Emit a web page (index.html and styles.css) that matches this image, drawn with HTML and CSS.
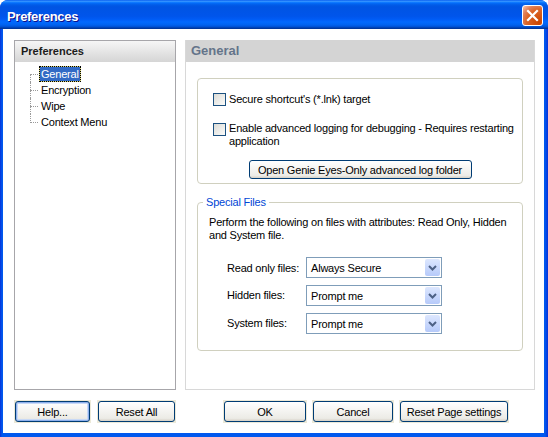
FILE: index.html
```html
<!DOCTYPE html>
<html>
<head>
<meta charset="utf-8">
<title>Preferences</title>
<link rel="stylesheet" href="styles.css">
</head>
<body>
<div class="window">
  <div class="titlebar">
    <span class="title">Preferences</span>
    <span class="close">
      <svg width="13" height="13" viewBox="0 0 13 13"><path d="M2 2 L11 11 M11 2 L2 11" stroke="#fff" stroke-width="2.2" stroke-linecap="square" fill="none"/></svg>
    </span>
  </div>
  <div class="client">
    <div class="main">
      <div class="nav">
        <div class="nav-head">Preferences</div>
        <ul class="tree">
          <li class="selected"><span>General</span></li>
          <li><span>Encryption</span></li>
          <li><span>Wipe</span></li>
          <li><span>Context Menu</span></li>
        </ul>
      </div>
      <div class="page">
        <div class="page-head">General</div>
        <div class="page-body">
          <div class="group first">
            <div class="check"><span class="box"></span><span class="ctext">Secure shortcut's (*.lnk) target</span></div>
            <div class="check two"><span class="box"></span><span class="ctext">Enable advanced logging for debugging - Requires restarting<br>application</span></div>
            <div class="btn-row"><span class="sbtn">Open Genie Eyes-Only advanced log folder</span></div>
          </div>
          <fieldset class="group special">
            <legend>Special Files</legend>
            <p>Perform the following on files with attributes: Read Only, Hidden<br>and System file.</p>
            <div class="rows">
              <div class="row"><span class="lbl">Read only files:</span><div class="combo"><span>Always Secure</span><span class="drop"><svg width="9" height="6" viewBox="0 0 9 6"><path d="M1 1 L4.5 4.5 L8 1" stroke="#4d6185" stroke-width="2" fill="none"/></svg></span></div></div>
              <div class="row"><span class="lbl up">Hidden files:</span><div class="combo"><span>Prompt me</span><span class="drop"><svg width="9" height="6" viewBox="0 0 9 6"><path d="M1 1 L4.5 4.5 L8 1" stroke="#4d6185" stroke-width="2" fill="none"/></svg></span></div></div>
              <div class="row"><span class="lbl up">System files:</span><div class="combo"><span>Prompt me</span><span class="drop"><svg width="9" height="6" viewBox="0 0 9 6"><path d="M1 1 L4.5 4.5 L8 1" stroke="#4d6185" stroke-width="2" fill="none"/></svg></span></div></div>
            </div>
          </fieldset>
        </div>
      </div>
    </div>
    <div class="buttons">
      <span class="xbtn help"><span>Help...</span></span>
      <span class="xbtn resetall"><span>Reset All</span></span>
      <span class="xbtn ok"><span>OK</span></span>
      <span class="xbtn cancel"><span>Cancel</span></span>
      <span class="xbtn resetpage"><span>Reset Page settings</span></span>
    </div>
  </div>
</div>
</body>
</html>
```

FILE: styles.css
```css
html, body {
  margin: 0;
  padding: 0;
  background: #ffffff;
}
body {
  font-family: "Liberation Sans", Arial, sans-serif;
  font-size: 11px;
  letter-spacing: -0.2px;
  color: #000;
}
.window {
  width: 548px;
  height: 437px;
  display: flex;
  flex-direction: column;
  background: linear-gradient(to right, #0831d9 0px, #0058ee 2px, #0058ee 545px, #0831d9 548px);
  border-radius: 8px 8px 0 0;
  overflow: hidden;
  box-sizing: border-box;
}
.titlebar {
  height: 29px;
  flex: none;
  display: flex;
  align-items: flex-start;
  justify-content: space-between;
  padding: 0 5px 0 7px;
  background: linear-gradient(to bottom, #0058ee 0%, #3a93ff 4%, #288eff 6%, #127dff 8%, #036ffc 10%, #0262ee 14%, #0057e5 20%, #0054e3 24%, #0055eb 56%, #005bf5 66%, #026afe 76%, #0062ef 86%, #0052d6 92%, #0040ab 96%, #003092 100%);
}
.title {
  color: #fff;
  font-weight: bold;
  font-size: 13px;
  line-height: 17px;
  margin-top: 8px;
  text-shadow: 1px 1px #0f1089;
  letter-spacing: -0.3px;
}
.close {
  margin-top: 5px;
  width: 21px;
  height: 21px;
  box-sizing: border-box;
  border: 1px solid #fff;
  border-radius: 3px;
  background: radial-gradient(circle at 85% 85%, #cc4600 0%, #dc6527 55%, #e0805a 75%, #f5b89c 95%);
  display: flex;
  align-items: center;
  justify-content: center;
}
.client {
  flex: 1;
  margin: 0 4px 4px 3px;
  background: #fff;
  padding: 11px 9px 0 11px;
  display: flex;
  flex-direction: column;
}
.main {
  display: flex;
  gap: 9px;
  height: 350px;
}
.nav {
  width: 162px;
  border: 1px solid #a7a6aa;
  box-sizing: border-box;
}
.nav-head {
  height: 21px;
  line-height: 21px;
  padding-left: 6px;
  font-weight: bold;
  color: #1c1c1c;
  letter-spacing: 0;
  background: linear-gradient(#f6f6f6, #d5d5d5);
}
.tree {
  list-style: none;
  margin: 0;
  padding: 4px 0 0 24px;
}
.tree li {
  position: relative;
  height: 16px;
  line-height: 16px;
}
.tree li span {
  display: inline-block;
  height: 16px;
  padding: 0 2px;
  box-sizing: border-box;
}
.tree li.selected span {
  background: #316ac5;
  color: #fff;
  box-shadow: inset 0 0 0 1px #d8d47a;
  outline: 1px dotted #000;
  outline-offset: -1px;
}
.tree li::before {
  content: "";
  position: absolute;
  left: -9px;
  top: 8px;
  width: 8px;
  border-top: 1px dotted #9a9a9a;
}
.tree li::after {
  content: "";
  position: absolute;
  left: -9px;
  top: 0;
  height: 16px;
  border-left: 1px dotted #9a9a9a;
}
.tree li:first-child::after {
  top: 8px;
  height: 8px;
}
.tree li:last-child::after {
  height: 9px;
}
.page {
  width: 350px;
  border: 1px solid #d8d8d8;
  border-top: none;
  box-sizing: border-box;
}
.page-head {
  height: 22px;
  line-height: 22px;
  padding-left: 5px;
  background: #d4d4d4;
  color: #64748a;
  font-weight: bold;
  font-size: 13px;
  letter-spacing: 0;
}
.page-body {
  padding: 16px 11px 0 11px;
}
.group {
  border: 1px solid #d0d0bf;
  border-radius: 4px;
}
.group.first {
  padding: 14px 0 4px 0;
}
.check {
  display: flex;
  align-items: flex-start;
  gap: 3px;
  line-height: 13px;
  margin-left: 15px;
}
.check.two {
  margin-top: 16px;
}
.ctext {
  white-space: nowrap;
}
.box {
  flex: none;
  width: 13px;
  height: 13px;
  box-sizing: border-box;
  border: 1px solid #1c5180;
  background: linear-gradient(135deg, #dcdcd7, #fbfbf9);
}
.check.two .box {
  margin-top: 1px;
}
.btn-row {
  display: flex;
  justify-content: center;
  margin-top: 12px;
}
.sbtn {
  width: 223px;
  height: 19px;
  box-sizing: border-box;
  border: 1px solid #003c74;
  border-radius: 3px;
  background: linear-gradient(#fff, #ecebe6 86%, #d6d0c5);
  display: flex;
  align-items: center;
  justify-content: center;
}
.special {
  margin: 12px 0 0 0;
  padding: 7px 0 16px 11px;
  min-width: 0;
}
.special legend {
  padding: 0 3px;
  margin-left: -6px;
  color: #0046d5;
  line-height: 13px;
}
.special p {
  margin: 0;
  line-height: 13px;
  white-space: nowrap;
}
.rows {
  margin-top: 15px;
  padding-left: 18px;
  display: flex;
  flex-direction: column;
  gap: 7px;
}
.row {
  display: flex;
  align-items: center;
  height: 21px;
}
.lbl {
  width: 79px;
  flex: none;
}
.lbl.up {
  position: relative;
  top: -1px;
}
.combo {
  width: 136px;
  height: 21px;
  box-sizing: border-box;
  border: 1px solid #7f9db9;
  display: flex;
  align-items: center;
  padding-left: 4px;
  background: #fff;
}
.drop {
  margin-left: auto;
  margin-right: 1px;
  width: 15px;
  height: 17px;
  border-radius: 2px;
  background: linear-gradient(#dde7fe, #b6cafa);
  display: flex;
  align-items: center;
  justify-content: center;
}
.buttons {
  display: flex;
  margin-top: 10px;
}
.xbtn {
  height: 23px;
  box-sizing: border-box;
  border: 1px solid #ece9d8;
  background: #ece9d8;
  display: block;
}
.xbtn > span {
  display: flex;
  align-items: center;
  justify-content: center;
  height: 100%;
  box-sizing: border-box;
  border: 1px solid #003c74;
  border-radius: 3px;
  background: linear-gradient(#fff, #ecebe6 86%, #d6d0c5);
}
.help > span {
  box-shadow: inset 0 0 0 1px #8eb0ec, inset 0 0 0 2px #c8d9f6;
}
.help { width: 77px; }
.resetall { width: 79px; margin-left: 6px; }
.ok { width: 84px; margin-left: 47px; }
.cancel { width: 82px; margin-left: 5px; }
.resetpage { width: 110px; margin-left: 5px; }
```
